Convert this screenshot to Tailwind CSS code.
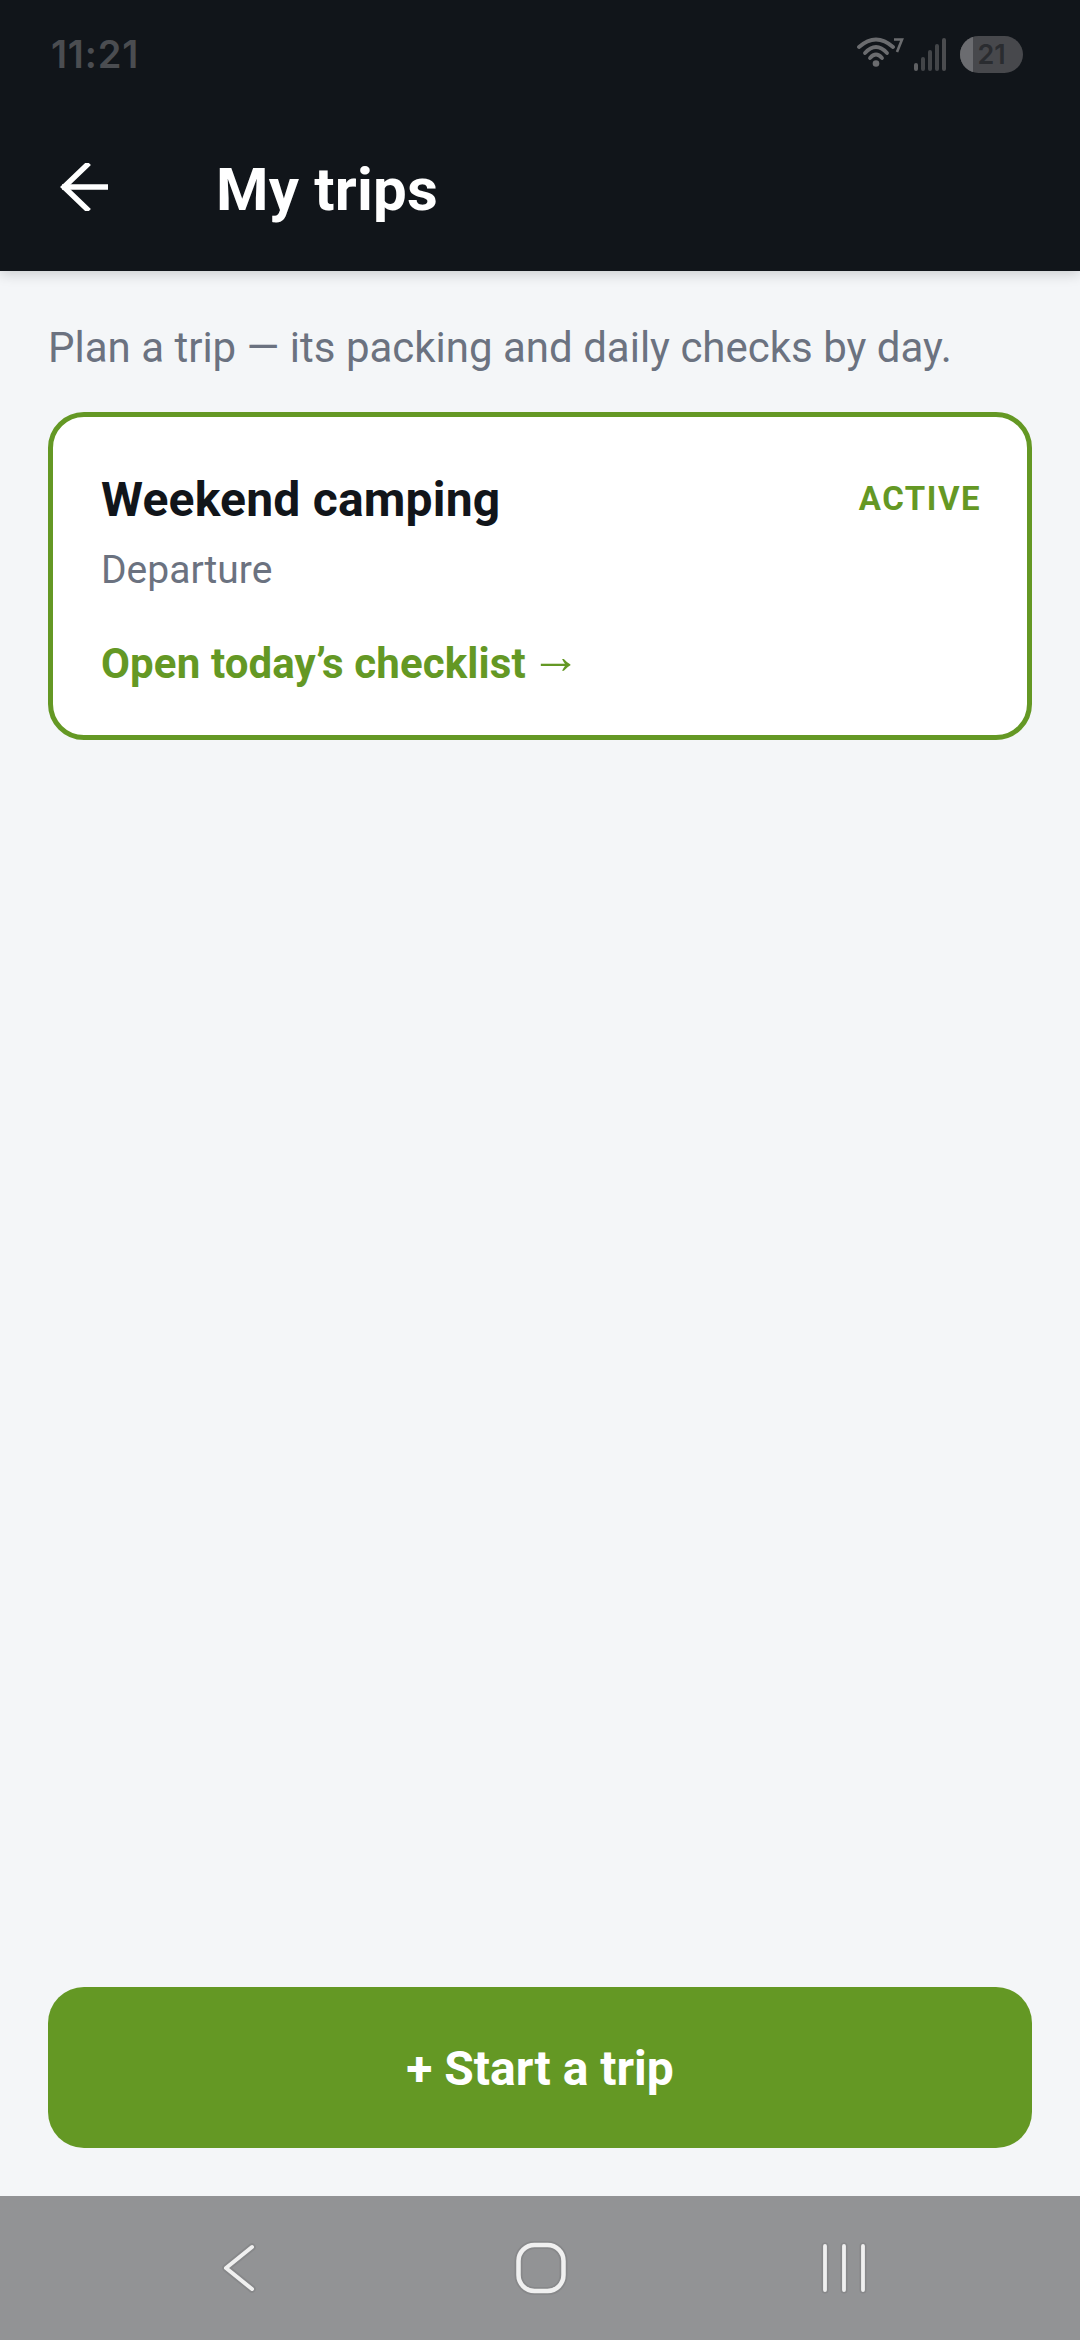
<!DOCTYPE html>
<html>
<head>
<meta charset="utf-8">
<script src="https://cdn.jsdelivr.net/npm/@tailwindcss/browser@4"></script>
</head>
<body class="m-0">
<div class="w-[1080px] h-[2340px] flex flex-col bg-[#f4f6f8] font-['Roboto',sans-serif] overflow-hidden">
  <header class="relative z-10 h-[271px] shrink-0 bg-[#11151a] shadow-[0_3px_12px_rgba(17,21,26,0.18)] flex flex-col">
    <div class="h-[110px] flex items-start justify-between pl-[51px] pr-[57px] pt-[32px]">
      <span class="font-['Inter',sans-serif] font-semibold text-[38px] leading-[45px] tracking-[0.8px] text-[#4b4d51]">11:21</span>
      <div class="flex items-start pt-[4px]">
        <svg width="48" height="36" viewBox="0 0 48 36" fill="none" stroke="#6b6c6f" stroke-width="3.800" stroke-linecap="round" class="mr-[9px]">
          <path d="M3 11 Q20 -4 37 11"/>
          <path d="M9 17 Q20 5 31 17"/>
          <path d="M14 22 Q20 15 26 22"/>
          <circle cx="20" cy="27.500" r="3.300" fill="#6b6c6f" stroke="none"/>
          <path d="M38 3.500 H46 L41 16" stroke-width="2.600" stroke-linecap="butt"/>
        </svg>
        <svg width="34" height="36" viewBox="0 0 34 36" class="mr-[13px]" fill="#434548">
          <rect x="1" y="27" width="4" height="8" rx="2" fill="#5f6063"/>
          <rect x="8" y="21" width="4" height="14" rx="2"/>
          <rect x="15" y="14" width="4" height="21" rx="2"/>
          <rect x="22" y="8" width="4" height="27" rx="2"/>
          <rect x="29" y="2" width="4" height="33" rx="2" fill="#4b4c4f"/>
        </svg>
        <div class="relative w-[63px] h-[37px] rounded-full overflow-hidden bg-[#47484c] flex items-center justify-center">
          <div class="absolute left-0 top-0 bottom-0 w-[13px] bg-[#6b6c70]"></div>
          <span class="relative font-['Inter',sans-serif] font-semibold text-[27px] leading-none text-[#2a2c30]">21</span>
        </div>
      </div>
    </div>
    <div class="flex items-center h-[161px] pb-[2px]">
      <svg width="48" height="48" viewBox="0 0 48 48" fill="none" stroke="#ffffff" stroke-width="5.500" class="ml-[60px] mr-[108px] mb-[5px]">
        <path d="M48 24 H2"/>
        <path d="M27 2 L4 24 L27 46" stroke-linecap="square"/>
      </svg>
      <h1 class="font-bold text-[60px] leading-[70px] tracking-[0.2px] text-white">My trips</h1>
    </div>
  </header>
  <main class="flex-1 flex flex-col px-[48px]">
    <p class="mt-[49px] text-[42px] leading-[56px] text-[#6b7280]">Plan a trip — its packing and daily checks by day.</p>
    <section class="mt-[36px] h-[328px] bg-white border-[5px] border-[#649824] rounded-[36px] pl-[48px] pr-[46px] pt-[55px] flex flex-col">
      <div class="flex items-start justify-between">
        <h2 class="font-bold text-[48px] leading-[56px] tracking-[0.2px] text-[#11151a]">Weekend camping</h2>
        <span class="font-bold text-[33px] leading-[54px] tracking-[1.5px] text-[#649824]">ACTIVE</span>
      </div>
      <p class="mt-[18px] text-[39px] leading-[48px] text-[#6b7280]">Departure</p>
      <p class="mt-[37px] h-[56px] font-bold text-[42px] leading-[56px] tracking-[0.13px] text-[#649824]">Open today’s checklist<span class="inline-block ml-[5px] font-['Liberation_Sans',sans-serif] font-normal text-[50px] leading-none align-[5px]">→</span></p>
    </section>
    <button class="mt-auto mb-[48px] h-[161px] w-full rounded-[36px] bg-[#649824] text-white font-bold text-[48px] pt-[2px] flex items-center justify-center">+ Start a trip</button>
  </main>
  <nav class="h-[144px] shrink-0 bg-[#929395] flex items-center pl-[220px]">
    <svg width="40" height="56" viewBox="0 0 40 56" fill="none" stroke-linecap="round" stroke-linejoin="round">
      <path d="M32 7 L6 28 L32 49" stroke="#87888a" stroke-width="7.500"/>
      <path d="M32 7 L6 28 L32 49" stroke="#f0f0f0" stroke-width="4"/>
    </svg>
    <svg width="54" height="56" viewBox="0 0 54 56" fill="none" class="ml-[254px]">
      <rect x="4.500" y="5" width="45" height="46" rx="16" stroke="#87888a" stroke-width="8"/>
      <rect x="4.500" y="5" width="45" height="46" rx="16" stroke="#f0f0f0" stroke-width="4.500"/>
    </svg>
    <svg width="48" height="56" viewBox="0 0 48 56" fill="none" stroke-linecap="round" class="ml-[252px]">
      <path d="M5 6 V50 M24 6 V50 M43 6 V50" stroke="#87888a" stroke-width="7"/>
      <path d="M5 6 V50 M24 6 V50 M43 6 V50" stroke="#f0f0f0" stroke-width="3.800"/>
    </svg>
  </nav>
</div>
</body>
</html>
